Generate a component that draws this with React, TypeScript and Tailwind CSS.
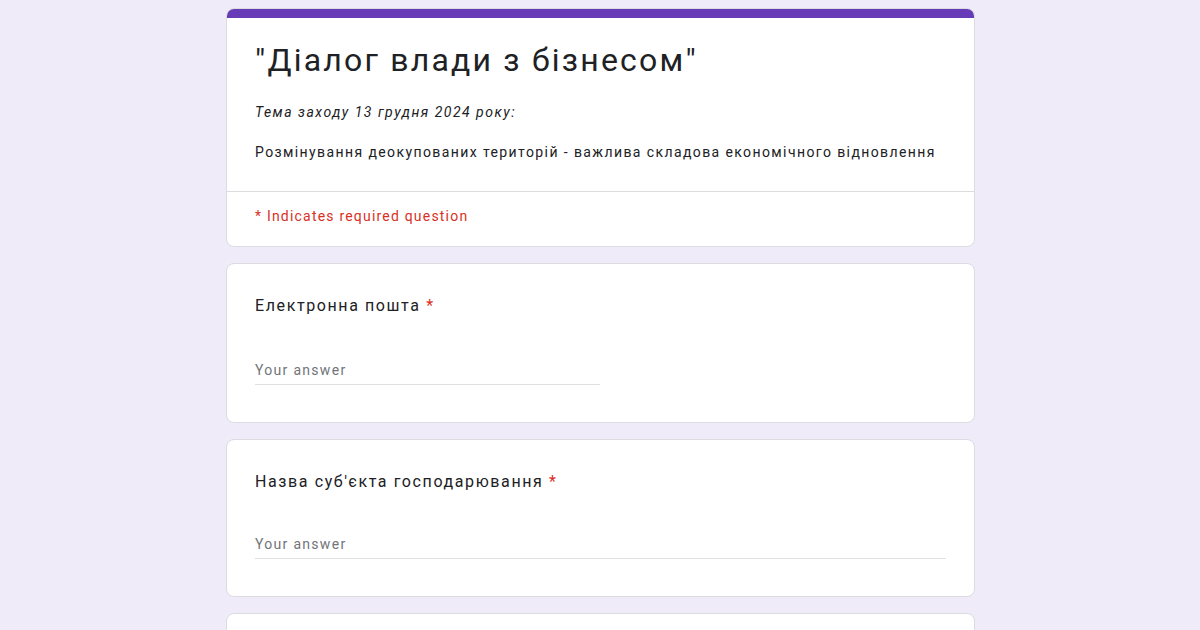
import React from 'react'

const font = { fontFamily: 'Roboto, "Noto Sans", Arial, sans-serif' }

function Question({ title, short }: { title: string; short?: boolean }) {
  return (
    <div className="bg-white border border-[#dadce0] rounded-lg px-[28px] pt-[30px] pb-[37px]">
      <div className="text-[16px] leading-[24px] text-[#202124] tracking-[1.6px]">
        {title} <span className="text-[#d93025]">*</span>
      </div>
      <div className={short ? 'w-[345px] mt-[42px]' : 'w-full mt-[40px]'}>
        <div className="text-[14px] leading-[20px] text-[#70757a] pb-[4px] tracking-[1.3px]">Your answer</div>
        <div className="h-px bg-[#e0e0e0]" />
      </div>
    </div>
  )
}

export default function App() {
  return (
    <div className="w-[1200px] h-[630px] overflow-hidden bg-[#f0ebf8]" style={font}>
      <div className="w-[749px] ml-[226px] pt-[8px] flex flex-col gap-[16px]">
        {/* Header card */}
        <div className="bg-white border border-[#dadce0] rounded-lg overflow-hidden">
          <div className="h-[10px] bg-[#673ab7] -mx-px -mt-px" />
          <div className="px-[28px] pt-[22px] pb-[29px] border-b border-[#dadce0]">
            <h1 className="text-[32px] leading-[40px] text-[#202124] font-normal tracking-[2.2px]">"Діалог влади з бізнесом"</h1>
            <p className="mt-[22px] text-[14px] leading-[20px] italic text-[#202124] tracking-[1.5px]">Тема заходу 13 грудня 2024 року:</p>
            <p className="mt-[20px] text-[14px] leading-[20px] text-[#202124] tracking-[1.4px] whitespace-nowrap">
              Розмінування деокупованих територій - важлива складова економічного відновлення
            </p>
          </div>
          <div className="px-[28px] pt-[14px] pb-[20px] text-[14px] leading-[20px] text-[#d93025] tracking-[1.2px]">
            * Indicates required question
          </div>
        </div>

        <Question title="Електронна пошта" short />
        <Question title="Назва суб'єкта господарювання" />
        <div className="bg-white border border-[#dadce0] rounded-lg h-[160px]" />
      </div>
    </div>
  )
}
